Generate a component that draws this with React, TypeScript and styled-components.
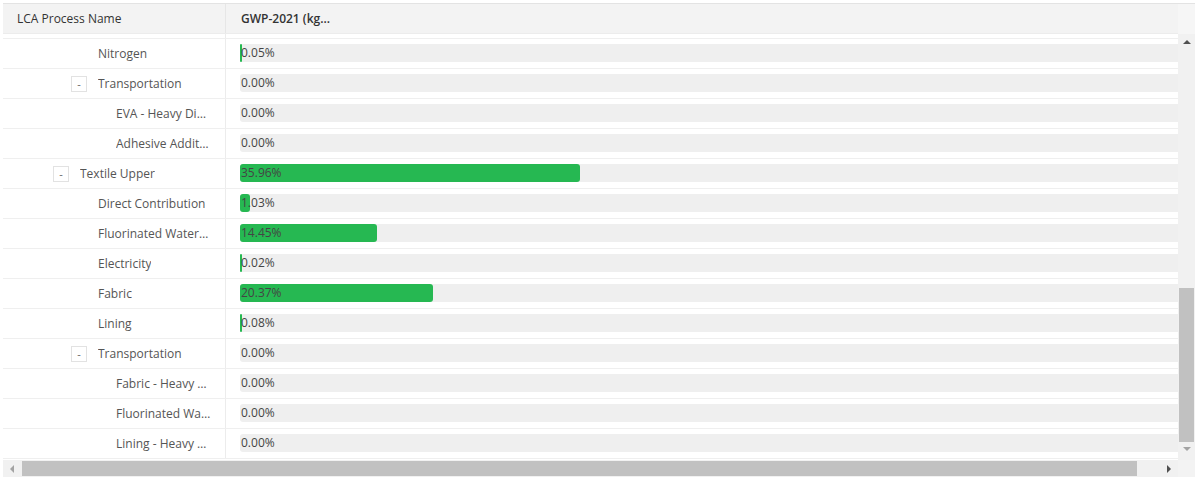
import styled, { createGlobalStyle } from "styled-components";

const GlobalStyle = createGlobalStyle`
  body {
    margin: 0;
    background: #ffffff;
    font-family: "Open Sans", "Noto Sans", sans-serif;
  }
`

const Frame = styled.div`
  margin: 3px 0 0 3px;
  width: 1192px;
  height: 474px;
  display: grid;
  grid-template-columns: 1fr 17px;
  grid-template-rows: 30px 1fr 17px;
  border-top: 1px solid #e3e3e3;
  box-sizing: border-box;
  overflow: hidden;
`
const Header = styled.div`
  display: grid;
  grid-template-columns: 223px 1fr;
  background: #f3f3f3;
  border-bottom: 1px solid #ececec;
  box-sizing: border-box;
`
const HeadCell = styled.div<{ $bold?: boolean }>`
  display: flex;
  align-items: center;
  padding-left: ${p => (p.$bold ? "15px" : "14px")};
  font-size: 12px;
  color: #333333;
  font-weight: ${p => (p.$bold ? 600 : 400)};
  border-right: ${p => (p.$bold ? "none" : "1px solid #e6e6e6")};
`
const Corner = styled.div`
  background: #f6f6f6;
`
const Body = styled.div`
  overflow: hidden;
`
const Rows = styled.div`
  margin-top: -25px;
  width: 1200px;
`
const Row = styled.div`
  display: grid;
  grid-template-columns: 223px 977px;
  height: 30px;
  border-bottom: 1px solid #efefef;
  box-sizing: border-box;
`
const NameCell = styled.div<{ $depth: number }>`
  display: flex;
  align-items: center;
  padding-left: ${p => p.$depth * 18 + 32}px;
  padding-right: 14px;
  border-right: 1px solid #ececec;
  min-width: 0;
  font-size: 12px;
  color: #555555;
`
const Toggle = styled.span<{ $hidden?: boolean }>`
  flex: none;
  width: 14px;
  height: 14px;
  margin-right: 11px;
  border: 1px solid #e2e2e2;
  display: flex;
  align-items: center;
  justify-content: center;
  font-size: 11px;
  line-height: 1;
  color: #666666;
  visibility: ${p => (p.$hidden ? "hidden" : "visible")};
`
const Label = styled.span`
  white-space: nowrap;
  overflow: hidden;
  text-overflow: ellipsis;
  min-width: 0;
`
const ValueCell = styled.div`
  display: flex;
  align-items: center;
  padding-left: 14px;
  padding-bottom: 1px;
`
const Track = styled.div`
  position: relative;
  width: 946px;
  height: 18px;
  background: #efefef;
  border-radius: 3px 0 0 3px;
`
const Fill = styled.div`
  height: 100%;
  background: #26b852;
  border-radius: 3px;
`
const Percent = styled.span`
  position: absolute;
  left: 1px;
  top: 0;
  line-height: 18px;
  font-size: 12px;
  color: #444444;
`
const VScroll = styled.div`
  background: #f1f1f1;
  display: flex;
  flex-direction: column;
  align-items: center;
  padding: 5px 1px;
  box-sizing: border-box;
`
const VThumb = styled.div`
  width: 15px;
  height: 154px;
  margin-top: auto;
  background: #c1c1c1;
`
const Arrow = styled.span<{ $dir: "up" | "down" | "left" | "right"; $dim?: boolean }>`
  flex: none;
  width: 0;
  height: 0;
  border: 4px solid transparent;
  ${p =>
    p.$dir === "up"
      ? `border-bottom: 4px solid ${p.$dim ? "#a3a3a3" : "#505050"}; border-top-width: 0; margin-top: 1px;`
      : p.$dir === "down"
      ? `border-top: 4px solid ${p.$dim ? "#a3a3a3" : "#505050"}; border-bottom-width: 0; margin: 5px 0 4px;`
      : p.$dir === "left"
      ? `border-right: 4px solid ${p.$dim ? "#a3a3a3" : "#505050"}; border-left-width: 0;`
      : `border-left: 4px solid ${p.$dim ? "#a3a3a3" : "#505050"}; border-right-width: 0;`}
`
const HScroll = styled.div`
  background: #f1f1f1;
  display: flex;
  align-items: center;
  padding: 0 7px;
  box-sizing: border-box;
`
const HThumb = styled.div`
  width: 1115px;
  height: 15px;
  margin-left: 8px;
  background: #c1c1c1;
`
const HSpacer = styled.div`
  flex: 1;
`
const Grip = styled.div`
  background: #f3f3f3;
`

interface IRow {
  depth: number;
  name: string;
  group?: boolean;
  value: number;
}

const rows: IRow[] = [
  { depth: 3, name: "Adhesive Additives - Heavy Diesel Truck", value: 0 },
  { depth: 2, name: "Nitrogen", value: 0.05 },
  { depth: 2, name: "Transportation", group: true, value: 0 },
  { depth: 3, name: "EVA - Heavy Diesel Truck", value: 0 },
  { depth: 3, name: "Adhesive Additives - Heavy Diesel Truck", value: 0 },
  { depth: 1, name: "Textile Upper", group: true, value: 35.96 },
  { depth: 2, name: "Direct Contribution", value: 1.03 },
  { depth: 2, name: "Fluorinated Waterproofing", value: 14.45 },
  { depth: 2, name: "Electricity", value: 0.02 },
  { depth: 2, name: "Fabric", value: 20.37 },
  { depth: 2, name: "Lining", value: 0.08 },
  { depth: 2, name: "Transportation", group: true, value: 0 },
  { depth: 3, name: "Fabric - Heavy Diesel Truck", value: 0 },
  { depth: 3, name: "Fluorinated Waterproofing - Heavy Diesel Truck", value: 0 },
  { depth: 3, name: "Lining - Heavy Diesel Truck", value: 0 },
];

function App() {
  return (
    <>
      <GlobalStyle />
      <Frame>
        <Header>
          <HeadCell>LCA Process Name</HeadCell>
          <HeadCell $bold>GWP-2021 (kg...</HeadCell>
        </Header>
        <Corner />
        <Body>
          <Rows>
            {rows.map((r, i) => (
              <Row key={i}>
                <NameCell $depth={r.depth}>
                  <Toggle $hidden={!r.group}>-</Toggle>
                  <Label>{r.name}</Label>
                </NameCell>
                <ValueCell>
                  <Track>
                    {r.value > 0 && (
                      <Fill style={{ width: Math.max(2, (r.value / 100) * 946) }} />
                    )}
                    <Percent>{r.value.toFixed(2)}%</Percent>
                  </Track>
                </ValueCell>
              </Row>
            ))}
          </Rows>
        </Body>
        <VScroll>
          <Arrow $dir="up" />
          <VThumb />
          <Arrow $dir="down" $dim />
        </VScroll>
        <HScroll>
          <Arrow $dir="left" $dim />
          <HThumb />
          <HSpacer />
          <Arrow $dir="right" />
        </HScroll>
        <Grip />
      </Frame>
    </>
  );
}

export default App;
